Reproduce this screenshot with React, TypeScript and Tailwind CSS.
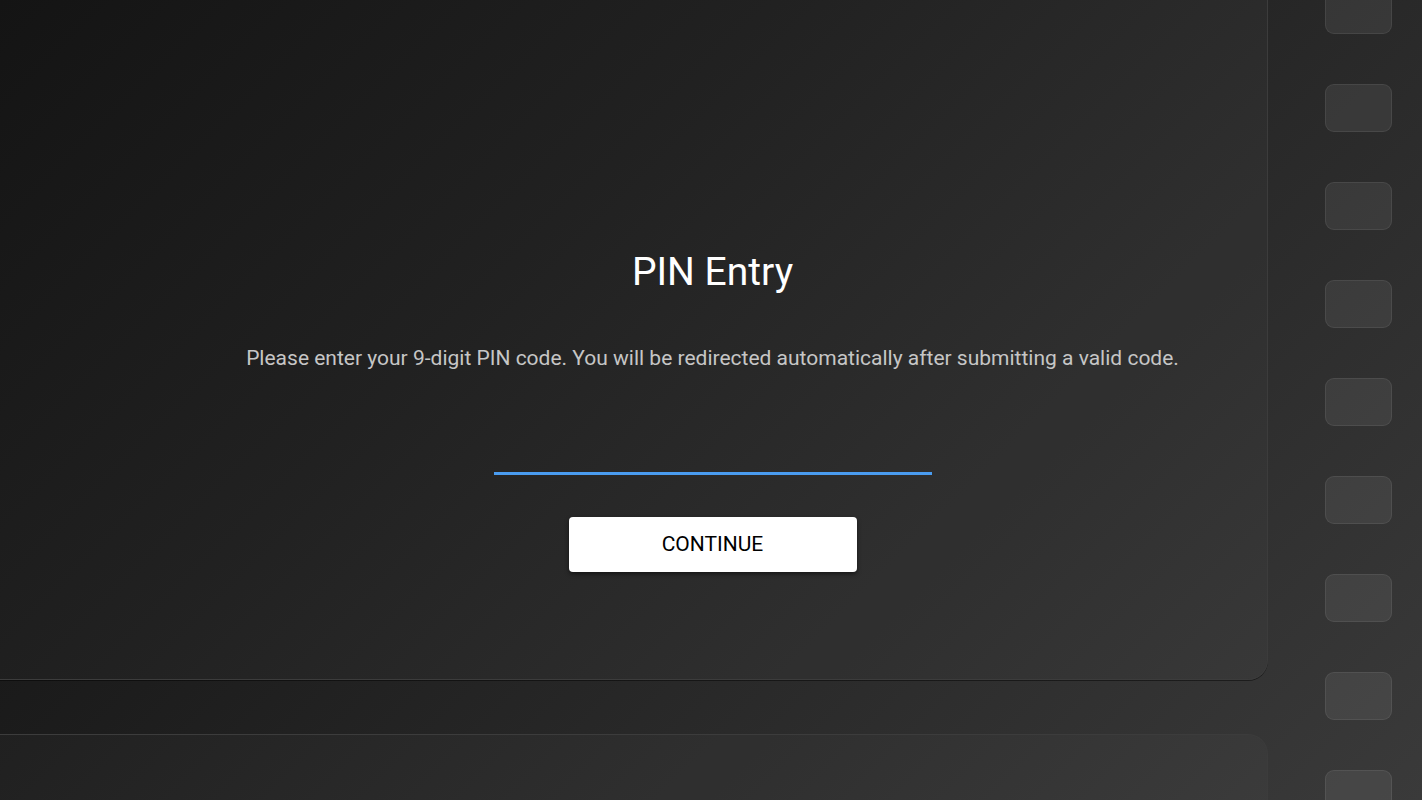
import { useState } from "react"

// PIN entry screen — dark card on a gradient, with a rail of tiles on the right.

const TILES = Array.from({ length: 9 })

export default function App() {
  const [pin, setPin] = useState("")

  return (
    <div
      className="h-[800px] w-full overflow-hidden flex bg-[linear-gradient(135deg,#0f0f0f_0%,#1c1c1c_35%,#2c2c2c_70%,#3a3a3a_100%)]"
      style={{ fontFamily: "Roboto, 'Noto Sans', sans-serif" }}
    >
      <div className="w-[1268px] shrink-0 flex flex-col">
        <div className="h-[680px] shrink-0 flex flex-col items-center pt-[248px] pl-[158px] bg-white/[0.025] border-r border-b border-[#3c3c3c] rounded-br-[20px] shadow-[0_1px_0_rgba(0,0,0,0.45)]">
          <h1 className="text-[39px] leading-[48px] text-white">PIN Entry</h1>
          <p className="mt-[50px] text-[21px] leading-[24px] text-[#c6c6c6] whitespace-nowrap">
            Please enter your 9-digit PIN code. You will be redirected automatically after submitting a valid code.
          </p>
          <input
            value={pin}
            onChange={(e) => setPin(e.target.value.replace(/\D/g, "").slice(0, 9))}
            inputMode="numeric"
            className="mt-[65px] w-[438px] h-[40px] bg-transparent text-white text-[22px] text-center outline-none border-b-[3px] border-[#4a9cf0]"
          />
          <button
            type="button"
            className="mt-[42px] w-[288px] h-[55px] rounded-[4px] bg-white text-black text-[21px] shadow-[0_2px_4px_rgba(0,0,0,0.5)]"
          >
            CONTINUE
          </button>
        </div>
        <div className="mt-[54px] flex-1 bg-white/[0.025] border-t border-r border-[#3c3c3c] rounded-tr-[20px]" />
      </div>

      <div className="pl-[57px] -mt-[14px] flex flex-col gap-[50px]">
        {TILES.map((_, i) => (
          <div
            key={i}
            className="w-[67px] h-[48px] shrink-0 rounded-[9px] bg-white/[0.07] border border-white/[0.07]"
          />
        ))}
      </div>
    </div>
  )
}
